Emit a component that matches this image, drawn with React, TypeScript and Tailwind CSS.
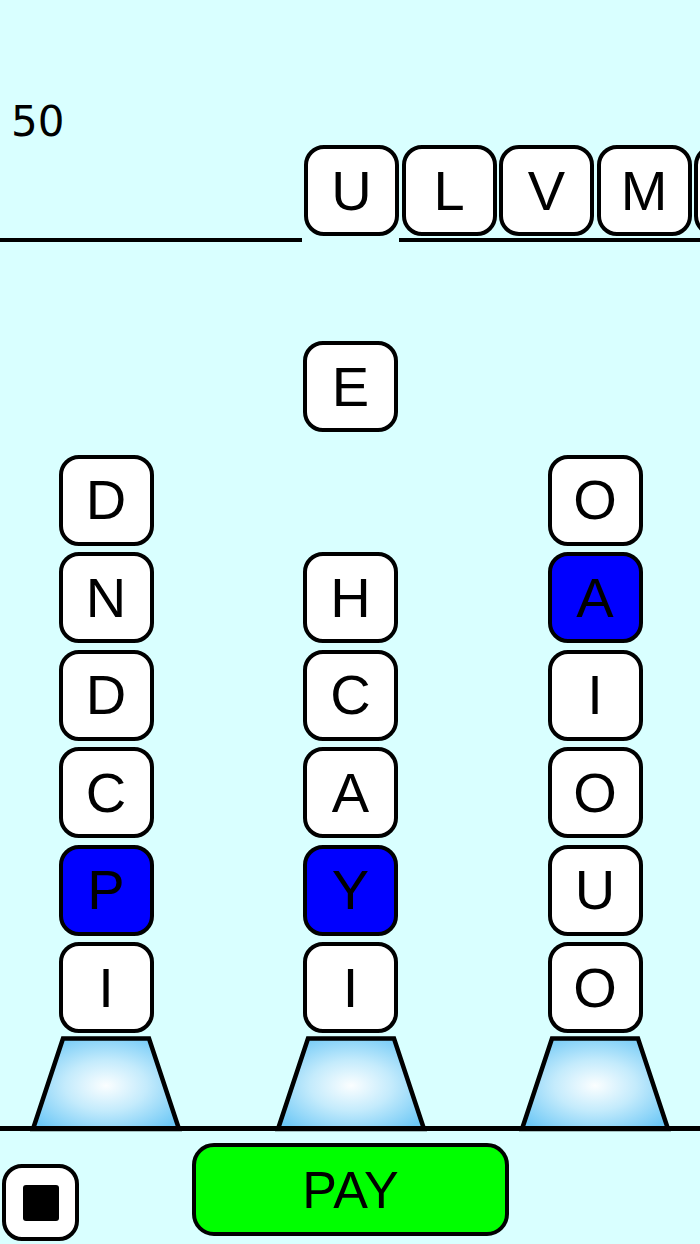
import React from 'react';

type TileData = { ch: string; active?: boolean };

const letterFont = { fontFamily: '"Liberation Sans Narrow", "Liberation Sans", "Noto Sans", sans-serif' };

function Tile({ ch, active, className = '' }: TileData & { className?: string }) {
  return (
    <div
      className={`flex h-[91px] w-[95px] shrink-0 items-center justify-center rounded-[20px] border-4 border-black text-[56px] leading-none text-black ${
        active ? 'bg-[#0000ff]' : 'bg-white'
      } ${className}`}
      style={letterFont}
    >
      {ch}
    </div>
  );
}

function Pedestal({ id }: { id: string }) {
  return (
    <svg width="148" height="90" viewBox="0 0 148 90" className="mt-[3px] block overflow-visible">
      <defs>
        <radialGradient id={id} cx="50%" cy="52%" r="62%">
          <stop offset="0%" stopColor="#fbfeff" />
          <stop offset="45%" stopColor="#c4ebfc" />
          <stop offset="100%" stopColor="#6ec8f6" />
        </radialGradient>
      </defs>
      <polygon
        points="31,2.5 117,2.5 147,93 1,93"
        fill={`url(#${id})`}
        stroke="#000"
        strokeWidth="4.5"
        strokeLinejoin="miter"
      />
    </svg>
  );
}

const columns: TileData[][] = [
  [{ ch: 'D' }, { ch: 'N' }, { ch: 'D' }, { ch: 'C' }, { ch: 'P', active: true }, { ch: 'I' }],
  [{ ch: 'H' }, { ch: 'C' }, { ch: 'A' }, { ch: 'Y', active: true }, { ch: 'I' }],
  [{ ch: 'O' }, { ch: 'A', active: true }, { ch: 'I' }, { ch: 'O' }, { ch: 'U' }, { ch: 'O' }],
];

// last tile runs off the right edge, its letter is out of view
const queue = ['U', 'L', 'V', 'M', ''];

export default function App() {
  return (
    <div className="flex h-[1244px] w-[700px] flex-col overflow-hidden bg-[#d9ffff]">
      {/* score */}
      <div className="h-[145px] shrink-0">
        <div
          className="ml-[11px] mt-[101px] text-[42px] leading-none text-black"
          style={{ fontFamily: '"DejaVu Sans", "Noto Sans", sans-serif' }}
        >
          50
        </div>
      </div>

      {/* word row */}
      <div className="flex h-[97px] shrink-0">
        <div className="flex w-[302px] shrink-0 flex-col justify-end">
          <div className="h-[4.5px] bg-black" />
        </div>
        <div className="ml-[2px] flex flex-col">
          <div className="flex gap-[2.5px]">
            {queue.map((ch, i) => (
              <Tile key={i} ch={ch} />
            ))}
          </div>
          <div className="ml-[95px] mt-[1.5px] h-[4.5px] w-[320px] bg-black" />
        </div>
      </div>

      {/* stacks */}
      <div className="flex h-[884px] shrink-0 items-end gap-[96.5px] pl-[32px]">
        {columns.map((col, ci) => (
          <div key={ci} className="flex w-[148px] flex-col items-center">
            <div className="flex flex-col items-center gap-[6.5px]">
              {ci === 1 && <Tile ch="E" className="mb-[113.5px]" />}
              {col.map((t, i) => (
                <Tile key={i} ch={t.ch} active={t.active} />
              ))}
            </div>
            <Pedestal id={`ped${ci}`} />
          </div>
        ))}
      </div>

      {/* floor */}
      <div className="h-[5px] shrink-0 bg-black" />

      {/* controls */}
      <div className="flex items-start">
        <button className="ml-[2px] mt-[33px] flex h-[77px] w-[77px] items-center justify-center rounded-[20px] border-4 border-black bg-white">
          <span className="block h-[36px] w-[36px] rounded-[3px] bg-black" />
        </button>
        <button
          className="ml-[113px] mt-[12px] flex h-[93px] w-[317px] items-center justify-center rounded-[22px] border-4 border-black bg-[#00ff00] text-[52px] leading-none text-black"
          style={letterFont}
        >
          PAY
        </button>
      </div>
    </div>
  );
}
